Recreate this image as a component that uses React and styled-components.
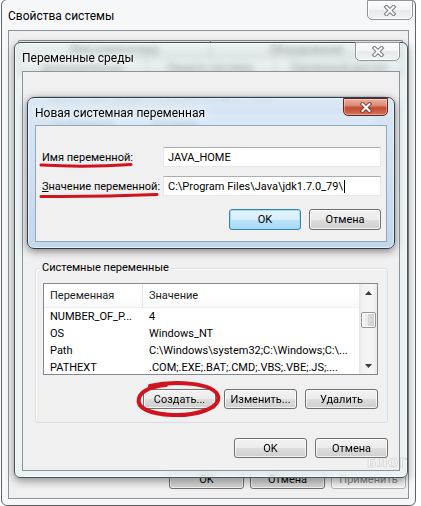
import React from "react";
import styled, { createGlobalStyle } from "styled-components";

const GlobalStyle = createGlobalStyle`
  * { box-sizing: border-box; }
  html, body { margin: 0; padding: 0; background: #ffffff; }
  body {
    font-family: Roboto, "Noto Sans", "DejaVu Sans", sans-serif;
    font-size: 11px;
    color: #000;
  }
`;

const Desktop = styled.div`
  position: relative;
  width: 421px;
  height: 506px;
  overflow: hidden;
  background: #ffffff;
`;

const kinds = {
  outer: {
    x: 1, y: -1, w: 415, h: 507, side: 6, edge: "#5f6367", radius: 6,
    bg: "#f6f7f8", shadow: "none", blur: 0,
  },
  env: {
    x: 14, y: 42, w: 394, h: 436, side: 7, edge: "#46525a", radius: 6,
    bg: "rgba(232, 244, 245, 0.6)", shadow: "0 3px 9px rgba(0,0,0,0.4)", blur: 3,
  },
  dialog: {
    x: 27, y: 97, w: 368, h: 152, side: 7, edge: "#2f3d4a", radius: 7,
    bg: "linear-gradient(rgba(212,230,246,0.8), rgba(188,212,236,0.88))",
    shadow: "0 2px 9px rgba(0,0,0,0.5)", blur: 3,
  },
};

// windows sit on a free desktop, so they are placed by coordinates
const Window = styled.section`
  position: absolute;
  left: ${(p) => kinds[p.$kind].x}px;
  top: ${(p) => kinds[p.$kind].y}px;
  width: ${(p) => kinds[p.$kind].w}px;
  height: ${(p) => kinds[p.$kind].h}px;
  display: flex;
  flex-direction: column;
  padding: 0 ${(p) => kinds[p.$kind].side}px 6px;
  border: 1px solid ${(p) => kinds[p.$kind].edge};
  border-radius: ${(p) => kinds[p.$kind].radius}px;
  background: ${(p) => kinds[p.$kind].bg};
  box-shadow: ${(p) => kinds[p.$kind].shadow}, inset 0 0 0 1px rgba(255, 255, 255, 0.55);
  backdrop-filter: ${(p) => (kinds[p.$kind].blur ? `blur(${kinds[p.$kind].blur}px)` : "none")};
`;

const TitleBar = styled.header`
  flex: none;
  display: flex;
  align-items: flex-start;
  height: ${(p) => p.$h}px;
`;

const Caption = styled.span`
  margin-top: ${(p) => p.$top}px;
  line-height: 16px;
  font-size: 12px;
  white-space: nowrap;
  text-shadow: 0 0 6px rgba(255, 255, 255, 0.95), 0 0 10px rgba(255, 255, 255, 0.8);
`;

const CloseButton = styled.div`
  margin-left: auto;
  margin-top: ${(p) => p.$top}px;
  margin-right: ${(p) => p.$right}px;
  width: ${(p) => p.$w}px;
  height: ${(p) => p.$h}px;
  display: flex;
  align-items: center;
  justify-content: center;
  border: 1px solid ${(p) => (p.$danger ? "#6a261a" : "#8f959b")};
  border-radius: 0 0 5px 5px;
  background: ${(p) =>
    p.$danger
      ? "linear-gradient(#eab0a2, #d98a78 40%, #c44a30 55%, #d2745b)"
      : "linear-gradient(#fdfdfd, #f1f4f6 50%, #e6eaed 50%, #f0f3f5)"};
  box-shadow: inset 0 0 0 1px rgba(255, 255, 255, ${(p) => (p.$danger ? 0.35 : 0.9)});
`;

const XGlyph = ({ danger }) => (
  <svg width="14" height="11" viewBox="0 0 14 11">
    <path
      d="M3.5 2 L10.5 9 M10.5 2 L3.5 9"
      stroke={danger ? "#6b2012" : "#74797e"}
      strokeWidth={danger ? 3.6 : 4}
      strokeLinecap="square"
      fill="none"
    />
    <path
      d="M3.5 2 L10.5 9 M10.5 2 L3.5 9"
      stroke="#ffffff"
      strokeWidth={danger ? 2.2 : 2}
      strokeLinecap="square"
      fill="none"
    />
  </svg>
);

const Panel = styled.div`
  flex: 1;
  display: flex;
  flex-direction: column;
  min-height: 0;
  border: 1px solid ${(p) => p.$edge || "#8a949c"};
  background: #f0f0f0;
`;

const OuterClient = styled(Panel)`
  padding: 9px 2px 9px 5px;
`;

const EnvClient = styled(Panel)`
  padding: 24px 11px 12px 12px;
`;

const DialogClient = styled(Panel)`
  padding: 21px 5px 11px 6px;
  border-color: #94a7ba;
`;

const TabStrip = styled.div`
  display: flex;
  flex-direction: column;
  margin: 0 4px;
`;

const TabRow = styled.div`
  display: flex;
  height: 18px;
`;

const Tab = styled.div`
  flex: 1;
  display: flex;
  align-items: center;
  justify-content: center;
  margin-right: -1px;
  border: 1px solid #898c95;
  border-bottom: none;
  border-radius: 2px 2px 0 0;
  background: linear-gradient(#f2f2f2, #ebebeb 50%, #dddddd 50%, #cfcfcf);
  white-space: nowrap;
`;

const ButtonRow = styled.div`
  display: flex;
  justify-content: flex-end;
  gap: ${(p) => p.$gap || 8}px;
  margin-top: ${(p) => (p.$push ? "auto" : `${p.$top || 0}px`)};
`;

const Button = styled.div`
  width: ${(p) => p.$w || 73}px;
  height: ${(p) => p.$h || 20}px;
  display: flex;
  align-items: center;
  justify-content: center;
  border: 1px solid ${(p) => (p.$default ? "#3c7fb1" : p.$disabled ? "#adb2b5" : "#707070")};
  border-radius: 3px;
  background: ${(p) =>
    p.$default
      ? "linear-gradient(#e5f4fc, #d6eefb 50%, #bde4f9 50%, #a7d9f5)"
      : p.$disabled
      ? "#f4f4f4"
      : "linear-gradient(#f2f2f2, #ebebeb 50%, #dddddd 50%, #cfcfcf)"};
  box-shadow: inset 0 0 0 1px ${(p) => (p.$default ? "rgba(150,220,250,0.9)" : "rgba(255,255,255,0.75)")};
  color: ${(p) => (p.$disabled ? "#838383" : "#000")};
  white-space: nowrap;
`;

const Group = styled.div`
  display: flex;
  flex-direction: column;
  flex: none;
  height: ${(p) => (p.$h ? `${p.$h}px` : "auto")};
  margin-bottom: ${(p) => p.$below || 0}px;
  padding: 0 9px 13px 7px;
  border: 1px solid #d5dfe5;
  border-radius: 3px;
  box-shadow: inset 1px 1px 0 #ffffff;
  overflow: ${(p) => (p.$h ? "hidden" : "visible")};
`;

const GroupTitle = styled.div`
  align-self: flex-start;
  margin: -9px 0 0 -3px;
  padding: 0 2px;
  line-height: 16px;
  background: #f0f0f0;
  white-space: nowrap;
`;

const ListView = styled.div`
  display: flex;
  flex: none;
  height: 92px;
  margin-top: 7px;
  border: 1px solid #828790;
  background: #ffffff;
`;

const ListBody = styled.div`
  flex: 1;
  display: flex;
  flex-direction: column;
  overflow: hidden;
`;

const ListHeader = styled.div`
  flex: none;
  display: flex;
  height: 24px;
  border-bottom: 1px solid #eef0f2;
  background: linear-gradient(#ffffff, #ffffff 60%, #f7f8f9);
`;

const HeaderCell = styled.div`
  display: flex;
  align-items: center;
  width: ${(p) => (p.$w ? `${p.$w}px` : "auto")};
  flex: ${(p) => (p.$w ? "none" : 1)};
  padding-left: 6px;
  border-right: ${(p) => (p.$w ? "1px solid #e3e5e8" : "none")};
  color: #1b1b1b;
`;

const ListRow = styled.div`
  flex: none;
  display: flex;
  height: 17px;
  align-items: center;
`;

const Cell = styled.div`
  width: ${(p) => (p.$w ? `${p.$w}px` : "auto")};
  flex: ${(p) => (p.$w ? "none" : 1)};
  padding-left: 6px;
  white-space: nowrap;
  overflow: hidden;
`;

const ScrollBar = styled.div`
  flex: none;
  width: 18px;
  display: flex;
  flex-direction: column;
  background: linear-gradient(90deg, #e6e6e6, #f3f3f3 25%, #f5f5f5 75%, #e8e8e8);
`;

const ScrollArrow = styled.div`
  flex: none;
  height: 17px;
  display: flex;
  align-items: center;
  justify-content: center;
`;

const ScrollTrack = styled.div`
  flex: 1;
  display: flex;
  flex-direction: column;
  align-items: center;
`;

const Thumb = styled.div`
  width: 15px;
  height: 16px;
  border: 1px solid #979797;
  border-radius: 2px;
  background: linear-gradient(90deg, #f3f3f3, #e8e8e8 50%, #d9d9d9 50%, #cfcfcf);
  box-shadow: inset 0 0 0 1px rgba(255, 255, 255, 0.8);
`;

const Arrow = ({ down }) => (
  <svg width="7" height="4" viewBox="0 0 7 4">
    <path d={down ? "M0 0 L7 0 L3.5 4 Z" : "M0 4 L7 4 L3.5 0 Z"} fill="#3a3a3a" />
  </svg>
);

const FieldGrid = styled.div`
  display: grid;
  grid-template-columns: 121px 1fr;
  row-gap: 9px;
  align-items: center;
`;

const FieldLabel = styled.label`
  white-space: nowrap;
`;

const TextBox = styled.div`
  height: 20px;
  display: flex;
  align-items: center;
  padding-left: 4px;
  border: 1px solid #e3e9ef;
  border-top-color: #abadb3;
  background: #ffffff;
  white-space: nowrap;
  overflow: hidden;
`;

const Caret = styled.span`
  display: inline-block;
  width: 1px;
  height: 13px;
  margin-left: 1px;
  background: #000;
`;

const Watermark = styled.span`
  position: absolute;
  left: 367px;
  top: 456px;
  font-family: "DejaVu Sans", sans-serif;
  font-size: 12px;
  font-weight: bold;
  letter-spacing: 1px;
  color: rgba(255, 255, 255, 0.4);
  -webkit-text-stroke: 0.6px rgba(150, 150, 150, 0.45);
  pointer-events: none;
`;

const Ink = styled.svg`
  position: absolute;
  left: 0;
  top: 0;
  pointer-events: none;
`;

const systemRows = [
  ["NUMBER_OF_P...", "4"],
  ["OS", "Windows_NT"],
  ["Path", "C:\\Windows\\system32;C:\\Windows;C:\\..."],
  ["PATHEXT", ".COM;.EXE;.BAT;.CMD;.VBS;.VBE;.JS;...."],
];

const VarList = ({ rows, scroll }) => (
  <ListView>
    <ListBody>
      <ListHeader>
        <HeaderCell $w={99}>Переменная</HeaderCell>
        <HeaderCell>Значение</HeaderCell>
      </ListHeader>
      {rows.map(([name, value]) => (
        <ListRow key={name}>
          <Cell $w={99}>{name}</Cell>
          <Cell>{value}</Cell>
        </ListRow>
      ))}
    </ListBody>
    {scroll && (
      <ScrollBar>
        <ScrollArrow>
          <Arrow />
        </ScrollArrow>
        <ScrollTrack>
          <Thumb style={{ marginTop: scroll }} />
        </ScrollTrack>
        <ScrollArrow>
          <Arrow down />
        </ScrollArrow>
      </ScrollBar>
    )}
  </ListView>
);

const App = () => {
  return (
    <Desktop>
      <GlobalStyle />

      <Window $kind="outer">
        <TitleBar $h={30}>
          <Caption $top={8}>Свойства системы</Caption>
          <CloseButton $top={0} $right={-4} $w={46} $h={20}>
            <XGlyph />
          </CloseButton>
        </TitleBar>
        <OuterClient>
          <TabStrip>
            <TabRow>
              <Tab>Имя компьютера</Tab>
              <Tab>Оборудование</Tab>
            </TabRow>
            <TabRow>
              <Tab>Дополнительно</Tab>
              <Tab>Защита системы</Tab>
              <Tab>Удаленный доступ</Tab>
            </TabRow>
          </TabStrip>
          <ButtonRow $push $gap={6}>
            <Button $w={75}>OK</Button>
            <Button $w={75}>Отмена</Button>
            <Button $w={75} $disabled>
              Применить
            </Button>
          </ButtonRow>
        </OuterClient>
      </Window>

      <Window $kind="env">
        <TitleBar $h={28}>
          <Caption $top={7}>Переменные среды</Caption>
          <CloseButton $top={-1} $right={0} $w={45} $h={19}>
            <XGlyph />
          </CloseButton>
        </TitleBar>
        <EnvClient>
          <Group $h={150} $below={22}>
            <GroupTitle>Переменные среды пользователя для Admin</GroupTitle>
            <VarList rows={[]} />
          </Group>
          <Group>
            <GroupTitle>Системные переменные</GroupTitle>
            <VarList rows={systemRows} scroll={11} />
            <ButtonRow $top={14}>
              <Button>Создать...</Button>
              <Button>Изменить...</Button>
              <Button>Удалить</Button>
            </ButtonRow>
          </Group>
          <ButtonRow $top={15}>
            <Button>OK</Button>
            <Button>Отмена</Button>
          </ButtonRow>
        </EnvClient>
      </Window>

      <Window $kind="dialog">
        <TitleBar $h={27}>
          <Caption $top={7}>Новая системная переменная</Caption>
          <CloseButton $top={0} $right={-1} $w={45} $h={18} $danger>
            <XGlyph danger />
          </CloseButton>
        </TitleBar>
        <DialogClient>
          <FieldGrid>
            <FieldLabel>Имя переменной:</FieldLabel>
            <TextBox>JAVA_HOME</TextBox>
            <FieldLabel>
              <u>З</u>начение переменной:
            </FieldLabel>
            <TextBox>
              {"C:\\Program Files\\Java\\jdk1.7.0_79\\"}
              <Caret />
            </TextBox>
          </FieldGrid>
          <ButtonRow $top={13}>
            <Button $w={72} $h={21} $default>
              OK
            </Button>
            <Button $w={72} $h={21}>
              Отмена
            </Button>
          </ButtonRow>
        </DialogClient>
      </Window>

      <Watermark>БЛОГ</Watermark>

      <Ink width="421" height="506" viewBox="0 0 421 506">
        <g fill="none" stroke="#d0141f" strokeLinecap="round">
          <path d="M41 165 Q86 167.5 131 164.5" strokeWidth="3" />
          <path d="M41 196.5 Q100 197 157 194.5" strokeWidth="3" />
          <path
            d="M150 386 C175 380 214 383 218 396 C221 409 194 416 172 415 C150 414 136 408 139 398 C141 391 152 386 166 385"
            strokeWidth="4"
          />
        </g>
      </Ink>
    </Desktop>
  );
};

export default App;
